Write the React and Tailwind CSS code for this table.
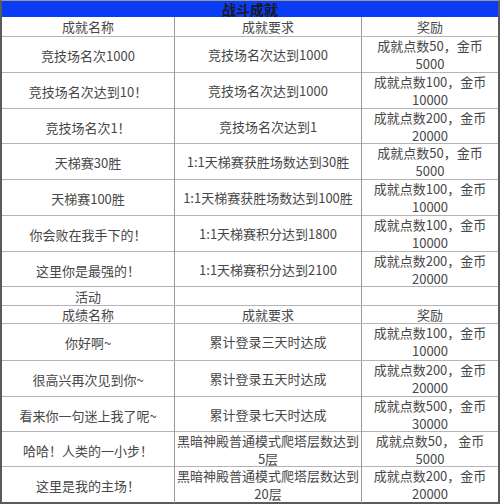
const battleRows = [
	{ h: "h-[36px]", name: "竞技场名次1000", req: ["竞技场名次达到1000"], reward: ["成就点数50，金币", "5000"] },
	{ h: "h-[36px]", name: "竞技场名次达到10！", req: ["竞技场名次达到1000"], reward: ["成就点数100，金币", "10000"] },
	{ h: "h-[35px]", name: "竞技场名次1！", req: ["竞技场名次达到1"], reward: ["成就点数200，金币", "20000"] },
	{ h: "h-[36px]", name: "天梯赛30胜", req: ["1:1天梯赛获胜场数达到30胜"], reward: ["成就点数50，金币", "5000"] },
	{ h: "h-[36px]", name: "天梯赛100胜", req: ["1:1天梯赛获胜场数达到100胜"], reward: ["成就点数100，金币", "10000"] },
	{ h: "h-[36px]", name: "你会败在我手下的！", req: ["1:1天梯赛积分达到1800"], reward: ["成就点数100，金币", "10000"] },
	{ h: "h-[35px]", name: "这里你是最强的！", req: ["1:1天梯赛积分达到2100"], reward: ["成就点数200，金币", "20000"] },
];

const eventRows = [
	{ h: "h-[37px]", name: "你好啊~", req: ["累计登录三天时达成"], reward: ["成就点数100，金币", "10000"] },
	{ h: "h-[36px]", name: "很高兴再次见到你~", req: ["累计登录五天时达成"], reward: ["成就点数200，金币", "20000"] },
	{ h: "h-[35px]", name: "看来你一句迷上我了呢~", req: ["累计登录七天时达成"], reward: ["成就点数500，金币", "30000"] },
	{ h: "h-[35px]", name: "哈哈！人类的一小步！", req: ["黑暗神殿普通模式爬塔层数达到", "5层"], reward: ["成就点数50， 金币", "5000"] },
	{ h: "h-[35px]", name: "这里是我的主场！", req: ["黑暗神殿普通模式爬塔层数达到", "20层"], reward: ["成就点数200，金币", "20000"] },
];

// two-line cells, stacked and centred
const Lines = ({ lines }) => (
	<span className="text-center leading-[18px] whitespace-nowrap">
		{lines.map((l, i) => (
			<span key={i} className="block h-[18px]">
				{l}
			</span>
		))}
	</span>
);

const Row = ({ h, cells, last }) => (
	<div className={`grid grid-cols-[173px_187px_136px] ${h} ${last ? "" : "border-b border-[#b4b4b4]"}`}>
		{cells.map((c, i) => (
			<div
				key={i}
				className={`flex items-center justify-center ${i < 2 ? "border-r border-[#9a9a9a]" : ""}`}
			>
				{Array.isArray(c) ? <Lines lines={c} /> : <span className="whitespace-nowrap leading-[17px]">{c}</span>}
			</div>
		))}
	</div>
);

const App = () => {
	return (
		<div
			className="w-[500px] h-[504px] bg-white border-t border-b-2 border-x-2 border-t-[#9a9a9a] border-[#5a5a5a] text-[13px] text-[#474747] flex flex-col"
			style={{ fontFamily: '"Noto Sans CJK SC", "Noto Sans", sans-serif' }}
		>
			<div className="h-[16px] bg-[#0a3cf6] flex items-center justify-center text-[#1a1a1a] font-semibold text-[14px] leading-none">
				战斗成就
			</div>
			<Row h="h-[20px]" cells={["成就名称", "成就要求", "奖励"]} />
			{battleRows.map((r, i) => (
				<Row key={i} h={r.h} cells={[r.name, r.req, r.reward]} />
			))}
			<Row h="h-[19px]" cells={["活动", "", ""]} />
			<Row h="h-[18px]" cells={["成绩名称", "成就要求", "奖励"]} />
			{eventRows.map((r, i) => (
				<Row key={i} h={r.h} cells={[r.name, r.req, r.reward]} last={i === eventRows.length - 1} />
			))}
		</div>
	);
};

export default App;
